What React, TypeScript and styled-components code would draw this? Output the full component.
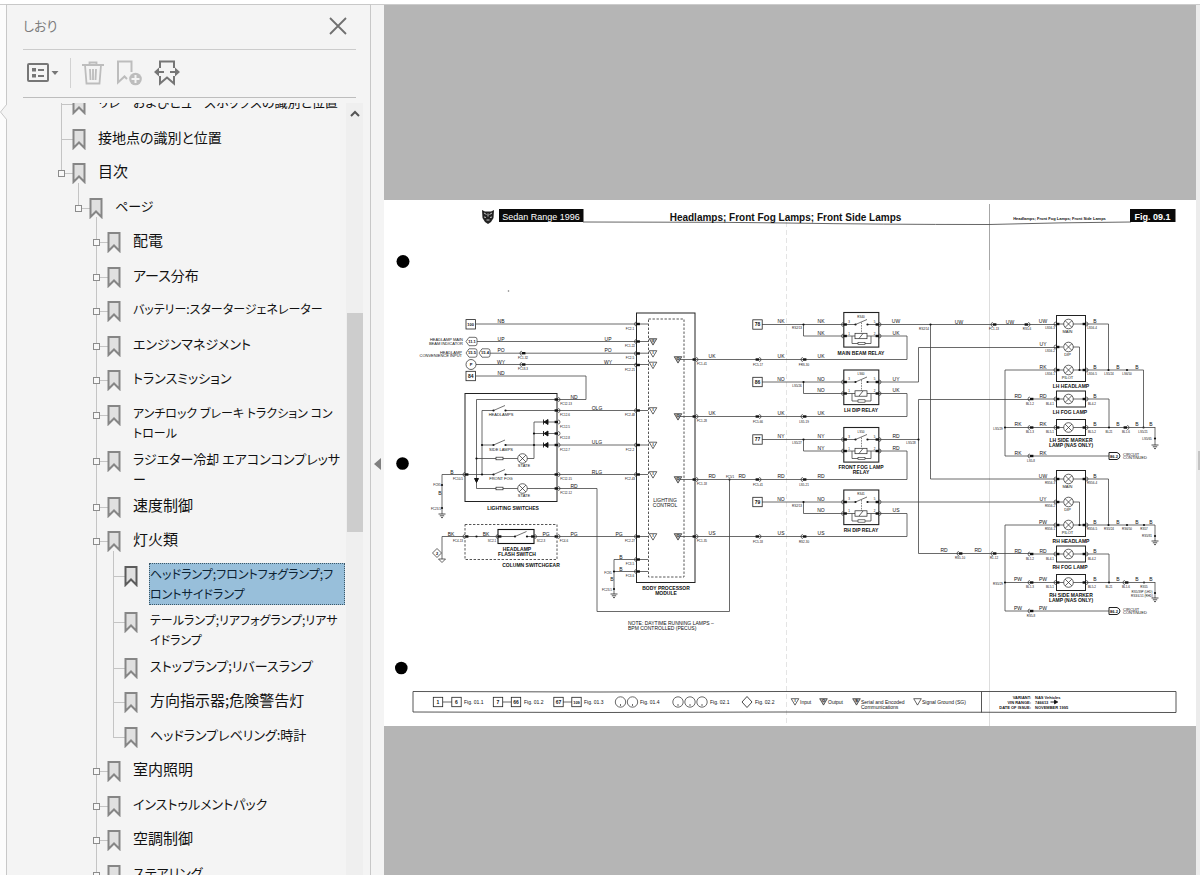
import React from "react";
import styled, { createGlobalStyle, css } from "styled-components";

const GlobalStyle = createGlobalStyle`
  * { box-sizing: border-box; }
  body {
    margin: 0;
    background: #fff;
    font-family: "Noto Sans CJK JP", "Liberation Sans", sans-serif;
  }
  button { border: 0; padding: 0; background: none; font: inherit; cursor: pointer; }
`;

/* ---------- window ---------- */

const Window = styled.div`
  display: flex;
  height: 100vh;
  padding-top: 4px;
  overflow: hidden;
`;

const TabStrip = styled.div`
  position: relative;
  flex: 0 0 6px;
  border-top: 1px solid #ccc;
  background: #fcfcfc;
`;

const TabPointer = styled.svg`
  position: absolute;
  left: 0;
  top: 98px;
  display: block;
`;

const Panel = styled.aside`
  flex: 0 0 365px;
  display: flex;
  flex-direction: column;
  padding-left: 16px;
  border: 1px solid #c8c8c8;
  border-bottom: 0;
  background: #f4f4f4;
`;

const PanelHeader = styled.header`
  display: flex;
  align-items: center;
  justify-content: space-between;
  height: 45px;
  margin-right: 14px;
  padding: 0 9px 3px 0;
  border-bottom: 1px solid #ccc;
`;

const PanelTitle = styled.h1`
  margin: 0;
  font-size: 13px;
  line-height: 20px;
  font-weight: 400;
  font-feature-settings: "palt";
  color: #7c7c7c;
`;

const IconButton = styled.button`
  display: flex;
  align-items: center;
  justify-content: center;
`;

const Toolbar = styled.div`
  display: flex;
  align-items: center;
  height: 48px;
  margin-right: 14px;
  padding: 0 0 1px 4px;
  gap: 11px;
  border-bottom: 1px solid #bdbdbd;
`;

const ToolDivider = styled.span`
  width: 1px;
  height: 30px;
  background: #d2d2d2;
`;

const TreeArea = styled.div`
  flex: 1;
  min-height: 0;
  display: flex;
  margin-top: 5px;
`;

const TreeViewport = styled.nav`
  flex: 1;
  overflow: hidden;
`;

const Tree = styled.ul`
  list-style: none;
  margin: -14px 0 0;
  padding: 0 0 0 49px;
`;

const INDENT = [0, 17, 35, 52];

const Row = styled.li<{ $depth: number }>`
  position: relative;
  display: flex;
  align-items: flex-start;
  gap: 10px;
  min-height: 34px;
  padding-left: ${(p) => INDENT[p.$depth]}px;
  &:nth-child(odd) { min-height: 35px; }
`;

const Rail = styled.span<{ $depth: number; $first?: boolean; $last?: boolean }>`
  position: absolute;
  left: ${(p) => INDENT[p.$depth] - 11}px;
  top: ${(p) => (p.$first ? -10 : 0)}px;
  width: 1px;
  ${(p) => (p.$last ? css`height: ${p.$first ? 25 : 15}px;` : css`bottom: 0;`)}
  background: #c4c4c4;
`;

const Twig = styled.span<{ $depth: number }>`
  position: absolute;
  left: ${(p) => INDENT[p.$depth] - 11}px;
  top: 15px;
  width: 12px;
  height: 1px;
  background: #c4c4c4;
`;

const Expander = styled.button<{ $depth: number }>`
  position: absolute;
  left: ${(p) => INDENT[p.$depth] - 14}px;
  top: 12px;
  width: 7px;
  height: 7px;
  border: 1px solid #8c8c8c;
  background: #f8f8f8;
`;

const Mark = styled.svg`
  position: relative;
  flex: none;
  display: block;
  margin-top: 5px;
`;

type Script = "kanji" | "mixed" | "kana" | "long";
const TEXT_SIZE: Record<Script, number> = { kanji: 15, mixed: 14, kana: 13, long: 12 };

const RowLink = styled.a<{ $script: Script; $selected?: boolean }>`
  flex: none;
  margin: 2px 0 2px 1px;
  border: 1px dotted ${(p) => (p.$selected ? "#3c5868" : "transparent")};
  min-width: ${(p) => (p.$selected ? 196 : 0)}px;
  background: ${(p) => (p.$selected ? "#98bfda" : "transparent")};
  color: ${(p) => (p.$selected ? "#0c2233" : "#111")};
  font-size: ${(p) => TEXT_SIZE[p.$script]}px;
  line-height: 20px;
  font-feature-settings: "palt";
  white-space: pre;
  text-decoration: none;
`;

const ScrollTrack = styled.div`
  flex: 0 0 17px;
  display: flex;
  flex-direction: column;
  align-items: center;
  margin-right: 7px;
  background: #efefef;
`;

const ScrollUp = styled(IconButton)`
  width: 17px;
  height: 20px;
`;

const ScrollThumb = styled.div`
  width: 16px;
  height: 25vh;
  margin-top: 190px;
  background: #cdcdcd;
`;

const Splitter = styled.div`
  flex: 0 0 13px;
  display: flex;
  align-items: center;
  justify-content: center;
  padding-top: 47px;
  border-top: 1px solid #ccc;
  background: #f4f4f4;
`;

const Viewer = styled.main`
  flex: 1;
  min-width: 0;
  padding-top: 195px;
  border-top: 1px solid #ccc;
  background: #b5b5b5;
`;

const Sheet = styled.svg`
  display: block;
  width: 100%;
  background: #fff;
  font-family: "Liberation Sans", Arial, sans-serif;
`;

const RightEdge = styled.div`
  flex: 0 0 4px;
  padding: 446px 0 0 2px;
  border-top: 1px solid #ccc;
  background: #ececec;
`;

const EdgeGrip = styled.div`
  height: 19px;
  background: #c4c4c4;
`;

/* ---------- bookmark tree ---------- */

type Item = { t: string; d: number; s: Script; open?: boolean; selected?: boolean; last?: boolean; first?: boolean };

const ITEMS: Item[] = [
  { t: "リレーおよびヒューズボックスの識別と位置", d: 0, s: "kana" },
  { t: "接地点の識別と位置", d: 0, s: "mixed" },
  { t: "目次", d: 0, s: "kanji", open: true, last: true },
  { t: "ページ", d: 1, s: "kana", open: true, first: true, last: true },
  { t: "配電", d: 2, s: "kanji", open: true, first: true },
  { t: "アース分布", d: 2, s: "mixed", open: true },
  { t: "バッテリー:スタータージェネレーター", d: 2, s: "long", open: true },
  { t: "エンジンマネジメント", d: 2, s: "kana", open: true },
  { t: "トランスミッション", d: 2, s: "kana", open: true },
  { t: "アンチロック ブレーキ トラクション コン\nトロール", d: 2, s: "long", open: true },
  { t: "ラジエター冷却 エアコンコンプレッサ\nー", d: 2, s: "kana", open: true },
  { t: "速度制御", d: 2, s: "kanji", open: true },
  { t: "灯火類", d: 2, s: "kanji", open: true },
  { t: "ヘッドランプ;フロントフォグランプ;フ\nロントサイドランプ", d: 3, s: "long", selected: true, first: true },
  { t: "テールランプ;リアフォグランプ;リアサ\nイドランプ", d: 3, s: "long" },
  { t: "ストップランプ;リバースランプ", d: 3, s: "kana" },
  { t: "方向指示器;危険警告灯", d: 3, s: "kanji" },
  { t: "ヘッドランプレベリング:時計", d: 3, s: "kana", last: true },
  { t: "室内照明", d: 2, s: "kanji", open: true },
  { t: "インストゥルメントパック", d: 2, s: "kana", open: true },
  { t: "空調制御", d: 2, s: "kanji", open: true },
  { t: "ステアリング", d: 2, s: "kana", open: true },
];

const BookmarkMark = ({ active }: { active?: boolean }) => (
  <Mark width="14" height="21" viewBox="0 0 14 21">
    <path d="M1.5 1H12.5V19L7 13.5L1.5 19Z" fill="#e0e0e0" stroke={active ? "#5c5c5c" : "#868686"} strokeWidth="2" />
  </Mark>
);

const BookmarkRow = ({ item }: { item: Item }) => (
  <Row $depth={item.d}>
    {item.d === 3 && <Rail $depth={2} />}
    <Rail $depth={item.d} $first={item.first} $last={item.last} />
    <Twig $depth={item.d} />
    {item.open && <Expander $depth={item.d} aria-label="展開" />}
    <BookmarkMark active={item.selected} />
    <RowLink href="#" $script={item.s} $selected={item.selected}>{item.t}</RowLink>
  </Row>
);

/* ---------- wiring sheet primitives ---------- */

type At = { x: number; y: number };
type Anchor = "start" | "middle" | "end";

const Label = ({ x, y, t, s = 5, b, a = "middle", fill = "#111" }: At & { t: string; s?: number; b?: boolean; a?: Anchor; fill?: string }) => (
  <text x={x} y={y} fontSize={s} fontWeight={b ? 700 : 400} textAnchor={a} fill={fill}>{t}</text>
);

const Labels = ({ list, s, b, a }: { list: [number, number, string][]; s?: number; b?: boolean; a?: Anchor }) => (
  <>{list.map(([x, y, t], i) => <Label key={i} x={x} y={y} t={t} s={s} b={b} a={a} />)}</>
);

const Wire = ({ d }: { d: string }) => <path d={d} fill="none" stroke="#444" strokeWidth="0.8" />;
const Dot = ({ x, y }: At) => <circle cx={x} cy={y} r="1.1" fill="#111" />;

const Joint = ({ x, y }: At) => (
  <g>
    <path d={`M${x} ${y - 2}a2 2 0 0 0 0 4`} fill="none" stroke="#333" strokeWidth="0.7" />
    <rect x={x} y={y - 1.2} width="3.4" height="2.4" fill="#111" />
  </g>
);

const JointBack = ({ x, y }: At) => (
  <g>
    <path d={`M${x} ${y - 2}a2 2 0 0 1 0 4`} fill="none" stroke="#333" strokeWidth="0.7" />
    <rect x={x - 3.4} y={y - 1.2} width="3.4" height="2.4" fill="#111" />
  </g>
);

const RefBox = ({ x, y, t }: At & { t: string }) => (
  <g>
    <rect x={x - 4.7} y={y - 4.7} width="9.4" height="9.4" fill="#fff" stroke="#222" strokeWidth="0.8" />
    <Label x={x} y={y + 1.8} t={t} s={t.length > 2 ? 4 : 5} b />
  </g>
);

const Tag = ({ x, y, t }: At & { t: string }) => (
  <g>
    <path d={`M${x} ${y}l3 -4.2h6q2 0 2 2v4.4q0 2 -2 2h-6z`} fill="#fff" stroke="#333" strokeWidth="0.7" />
    <Label x={x + 6} y={y + 1.4} t={t} s={4} b />
  </g>
);

const Lamp = ({ x, y }: At) => (
  <g fill="#fff" stroke="#222" strokeWidth="0.7">
    <circle cx={x} cy={y} r="4.8" />
    <path d={`M${x - 3.3} ${y - 3.3}l6.6 6.6M${x + 3.3} ${y - 3.3}l-6.6 6.6`} />
  </g>
);

const Switch = ({ x, y }: At) => (
  <g>
    <rect x={x} y={y - 2} width="12" height="4" fill="#fff" />
    <Dot x={x} y={y} />
    <Dot x={x + 12} y={y} />
    <path d={`M${x} ${y}l11.5 -5`} stroke="#333" strokeWidth="0.7" />
  </g>
);

const Ground = ({ x, y }: At) => (
  <path d={`M${x - 3.5} ${y}h7M${x - 2.2} ${y + 1.8}h4.4M${x - 1} ${y + 3.6}h2`} stroke="#222" strokeWidth="0.8" />
);

const Diode = ({ x, y }: At) => <path d={`M${x} ${y}l4 -2.5v5zM${x - 0.5} ${y - 2.5}v5`} fill="#111" stroke="#111" strokeWidth="0.9" />;

const Tri = ({ x, y, solid, t = "" }: At & { solid?: boolean; t?: string }) => (
  <g>
    <path d={`M${x - 3.8} ${y - 2.8}h7.6l-3.8 6.4z`} fill={solid ? "#bbb" : "#fff"} stroke="#222" strokeWidth="0.7" />
    <Label x={x} y={y + 0.9} t={t} s={4} b />
  </g>
);

const Frame = ({ x, y, w, h, dashed }: At & { w: number; h: number; dashed?: boolean }) => (
  <rect x={x} y={y} width={w} height={h} fill="none" stroke={dashed ? "#555" : "#222"} strokeWidth="1" strokeDasharray={dashed ? "2.4 1.6" : undefined} />
);

const Relay = ({ y, id }: { y: number; id: string }) => (
  <g>
    <rect x="843.8" y={y - 12} width="35" height="34.6" fill="#fff" stroke="#222" strokeWidth="1.1" />
    <Label x={861} y={y - 7} t={id} s={3} />
    <Wire d={`M844 ${y}h11M867 ${y}h12M844 ${y + 11.5}h11M867 ${y + 11.5}h12M852 ${y + 11.5}v7.5h19v-7.5`} />
    <Switch x={855.5} y={y} />
    <path d={`M861.5 ${y - 2}v11`} stroke="#333" strokeWidth="0.6" strokeDasharray="1.6 1" />
    <rect x="855" y={y + 8.8} width="12" height="5.4" fill="#fff" stroke="#222" strokeWidth="0.7" />
    <path d={`M859 ${y + 14}l4 -5`} stroke="#222" strokeWidth="0.7" />
    <rect x="858" y={y + 17.8} width="7" height="2.4" fill="#fff" stroke="#222" strokeWidth="0.6" />
    {[0, 11.5].map((o) => (
      <React.Fragment key={o}>
        <Joint x={843.5} y={y + o} />
        <JointBack x={879} y={y + o} />
      </React.Fragment>
    ))}
    <Labels s={3} list={[[849, y - 1.6, "3"], [874.5, y - 1.6, "5"], [849, y + 10, "1"], [874.5, y + 10, "2"]]} />
  </g>
);

type Feed = { y: number; ret: number; no: string; id: string; a: string; r: string; l1: string; l2: string; n: string; c1: string; c2: string };

const FEEDS: Feed[] = [
  { y: 324.5, ret: 359.5, no: "78", id: "RS40", a: "NK", r: "UK", l1: "UW", l2: "UK", n: "RS2/13", c1: "FC5-17", c2: "FRS-30" },
  { y: 382, ret: 416.5, no: "86", id: "LS60", a: "NO", r: "UK", l1: "UY", l2: "UK", n: "LS5/26", c1: "FC5-66", c2: "LS5-19" },
  { y: 439.5, ret: 479.5, no: "77", id: "LS50", a: "NY", r: "RD", l1: "RD", l2: "RD", n: "LS5/27", c1: "FC5-41", c2: "LS5-21" },
  { y: 502, ret: 536.5, no: "79", id: "RS41", a: "NO", r: "US", l1: "", l2: "US", n: "RS2/13", c1: "FC5-18", c2: "RS2-30" },
];

const RelayFeed = ({ f }: { f: Feed }) => (
  <g>
    <Wire d={`M762 ${f.y}H844M803.5 ${f.y}v11.5H844M879 ${f.y + 11.5}H907V${f.ret}H695`} />
    <RefBox x={757.5} y={f.y} t={f.no} />
    <Dot x={803.5} y={f.y} />
    <Labels list={[[781, f.y - 1.5, f.a], [821, f.y - 1.5, f.a], [821, f.y + 10, f.a], [896, f.y - 1.5, f.l1], [896, f.y + 10, f.l2], [712, f.ret - 1.5, f.r], [781, f.ret - 1.5, f.r], [821, f.ret - 1.5, f.r]]} />
    <Labels s={3} list={[[797, f.y + 4.5, f.n], [758, f.ret + 6, f.c1], [804, f.ret + 6, f.c2]]} />
    <JointBack x={759} y={f.ret} />
    <Joint x={803} y={f.ret} />
    <Relay y={f.y} id={f.id} />
  </g>
);

const LampSet = ({ y, side, p }: { y: number; side: string; p: string }) => (
  <g>
    <Wire d={`M1005 ${y + 46}H1109M1005 ${y + 46}V${y + 132}H1109M1005 ${y + 103.5}H1155M1057 ${y}H1108.5V${y + 46}M1073 ${y + 23}h6.5v23M1057 ${y + 23}h6M1030 ${y + 75}H1109V${y + 103.5}`} />
    {[[-8.5, 66], [67, 16], [95.5, 16]].map(([o, h]) => <Frame key={o} x={1056.5} y={y + o} w={29} h={h} />)}
    {[0, 23, 46, 75, 103.5].map((o) => <React.Fragment key={o}><Lamp x={1068.5} y={y + o} /><Joint x={1056} y={y + o} /></React.Fragment>)}
    {[0, 46, 75, 103.5].map((o) => <JointBack key={o} x={1086} y={y + o} />)}
    {[75, 103.5, 132].map((o) => <Joint key={o} x={1030} y={y + o} />)}
    <Dot x={1108.5} y={y + 46} /><Dot x={1109} y={y + 103.5} /><Dot x={1005} y={y + 103.5} /><Dot x={1079.5} y={y + 46} />
    <Labels s={4} list={[[1067.5, y + 9.4, "MAIN"], [1067.5, y + 32.4, "DIP"], [1067.5, y + 55.4, "PILOT"]]} />
    <Labels b list={[[1071, y + 64, `${side} HEADLAMP`], [1070, y + 90, `${side} FOG LAMP`], [1071, y + 118, `${side} SIDE MARKER`], [1071, y + 123, "LAMP (NAS ONLY)"]]} />
    <Labels list={[[1043, y - 1.5, "UW"], [1043, y + 21.5, "UY"], [1043, y + 44.5, p], [1018, y + 73.5, "RD"], [1043, y + 73.5, "RD"], [1018, y + 102, p], [1043, y + 102, p], [1018, y + 130.5, p], [1043, y + 130.5, p],
      [1095, y - 1.5, "B"], [1095, y + 44.5, "B"], [1118, y + 44.5, "B"], [1137, y + 44.5, "B"], [1095, y + 73.5, "B"], [1095, y + 102, "B"], [1118, y + 102, "B"], [1137, y + 102, "B"], [1151, y + 102, "B"]]} />
    <Labels s={3} list={[[1050, y + 5, `${side[0]}S56-3`], [1050, y + 28, `${side[0]}S56-2`], [1050, y + 51, `${side[0]}S56-1`], [1092, y + 5, `${side[0]}S56-4`], [1092, y + 51, `${side[0]}S56-5`], [1030, y + 80.5, "BL1-2"], [1050, y + 80.5, "BL4-1"], [1092, y + 80.5, "BL4-2"], [1030, y + 109, "BL1-3"], [1050, y + 109, "BL5-1"], [1092, y + 109, "BL5-2"], [1109, y + 109, "BL21"], [1126, y + 109, "BL1-6"], [1109, y + 51, `${side[0]}S5/24`], [1127, y + 51, `${side[0]}S6/50`], [1031, y + 138, `${side[0]}S5-8`], [998, y + 105.5, `${side[0]}S5/29`]]} />
    <path d={`M1109 ${y + 128.5}h8q3 1 3 3.5t-3 3.5h-8z`} fill="#fff" stroke="#222" />
    <Label x={1114} y={y + 133.6} t="86.2" s={4} b />
    <Labels s={4} a="start" list={[[1123, y + 131.5, "CIRCUIT"], [1123, y + 135, "CONTINUED"]]} />
  </g>
);

const IN_ROWS: [number, string][] = [[324, "FC2-1"], [341.5, "FC1-22"], [353.5, "FC2-5"], [365, "FC2-21"], [410.5, "FC2-48"], [445, "FC2-2"], [474.5, "FC2-43"], [536.5, "FC2-27"], [559.5, "FC3-5"], [571.5, "FC3-6"]];
const OUT_ROWS: [number, string][] = [[359.5, "FC1-41"], [416.5, "FC1-28"], [479.5, "FC1-18"], [536.5, "FC1-35"]];

const SwitchPart = () => (
  <g>
    <Wire d="M476 324H648M477 341.5H648M490 353.2H648M476 364.5H648M476 376H586V399.5H476.5V488.5H597V611.5H729.5V479.5" />
    <Wire d="M482 474.5V410.5H648M482 445H648M534 458.5V422H557M534 433.5H557M476.5 458.5H534M442 514V474.5H648M442 559V536.5H648M648 559.5H614V594M614 571.5H648" />
    <RefBox x={470.7} y={324.3} t="100" />
    <RefBox x={470.7} y={376} t="84" />
    <Tag x={466} y={341.5} t="11.1" />
    <Tag x={466} y={353} t="15.5" />
    <Tag x={479} y={353} t="15.4" />
    <circle cx="471" cy="364.5" r="5" fill="#fff" stroke="#222" strokeWidth="0.7" />
    <Label x={471} y={366.2} t="P" s={4} b />
    <Labels s={4} a="end" list={[[463, 341, "HEADLAMP MAIN"], [463, 344.5, "BEAM INDICATOR"], [462, 353.5, "HEADLAMP"], [462, 357, "CONVENIENCE INPUT"]]} />
    <Labels list={[[501, 323, "NB"], [501, 340.5, "UP"], [608, 340.5, "UP"], [501, 352, "PO"], [608, 352, "PO"], [501, 363.5, "WY"], [608, 363.5, "WY"], [501, 375, "ND"], [574, 398.5, "ND"], [597, 409.5, "OLG"], [597, 444, "ULG"], [597, 473.5, "RLG"], [574, 487.5, "RD"], [452, 473.5, "B"], [440, 495, "B"], [451, 535.5, "BK"], [486, 535.5, "BK"], [546, 535.5, "PG"], [574, 535.5, "PG"], [619, 535.5, "PG"], [621, 558.5, "B"], [621, 570.5, "B"], [612, 581, "B"], [742, 478, "RD"]]} />
    <Joint x={522} y={353.2} />
    <Joint x={522} y={364.5} />
    <Labels s={3} list={[[523, 358.5, "FC1-32"], [523, 370, "FC18-3"], [566, 405, "FC12-13"], [565, 416, "FC12-6"], [565, 427.5, "FC12-5"], [565, 439, "FC12-8"], [565, 450.5, "FC12-7"], [566, 480, "FC12-15"], [566, 494, "FC12-12"], [458, 480, "FC10-5"], [437, 486, "FC95"], [436, 510, "FC23-5"], [458, 542, "FC4-13"], [492, 542, "SC2-1"], [541, 542, "SC2-3"], [564, 542, "FC4-6"], [608, 573.5, "FC95"], [607, 591, "FC23-5"], [730, 478, "FC5/1"]]} />
    <Frame x={465} y={393.5} w={92} h={108} />
    {[399.5, 410.5, 422, 433.5, 445, 474.5, 488.5, 536.5].map((y) => <JointBack key={y} x={558} y={y} />)}
    <Joint x={465} y={474.5} />
    <Joint x={465} y={536.5} />
    {[410.5, 445, 474.5].map((y) => <Switch key={y} x={493.5} y={y} />)}
    {[422, 433.5, 445].map((y) => <Diode key={y} x={544} y={y} />)}
    <path d="M474.5 478.5h4l-2 4z" fill="#111" stroke="#111" />
    {[458.5, 488.5].map((y) => (
      <g key={y}>
        <rect x="496" y={y - 1.3} width="7" height="2.6" fill="#fff" stroke="#222" strokeWidth="0.7" />
        <Lamp x={522.5} y={y} />
      </g>
    ))}
    <Labels s={4} list={[[501, 416, "HEADLAMPS"], [501, 450.5, "SIDE LAMPS"], [501, 480, "FRONT FOG"], [524, 467, "STATE"], [524, 496.5, "STATE"]]} />
    {[[476.5, 458.5], [482, 445], [482, 474.5], [534, 433.5], [534, 445], [442, 485], [442, 508], [614, 571.5], [614, 589], [729.5, 479.5]].map(([x, y]) => <Dot key={`${x} ${y}`} x={x} y={y} />)}
    <Ground x={442} y={514} />
    <Ground x={614} y={594} />
    <path d="M438.5 559h7l-3.5 3.5z" fill="#fff" stroke="#222" strokeWidth="0.7" />
    <path d="M437 548.5l4.5 4.5l-4.5 4.5l-4.5 -4.5z" fill="#fff" stroke="#222" strokeWidth="0.7" />
    <Label x={437} y={554.5} t="2" s={4} b />
    <Frame x={465} y={524.5} w={92} h={35} dashed />
    <rect x="498" y="529.5" width="36" height="14" fill="#fff" stroke="#111" strokeWidth="1.1" />
    <Wire d="M498 536.5H534" />
    <Switch x={515} y={536.5} />
    <Joint x={498} y={536.5} />
    <JointBack x={534.5} y={536.5} />
    <Dot x={476.5} y={536.5} />
    <Labels b list={[[513, 509.5, "LIGHTING SWITCHES"], [517, 550.5, "HEADLAMP"], [517, 555.5, "FLASH SWITCH"], [531, 566.5, "COLUMN SWITCHGEAR"], [666, 589.5, "BODY PROCESSOR"], [666, 594.5, "MODULE"]]} />
    <Labels list={[[665, 502, "LIGHTING"], [665, 507, "CONTROL"]]} />
    <Labels a="start" list={[[628, 625, "NOTE: DAYTIME RUNNING LAMPS –"], [628, 630, "BPM CONTROLLED (PECUS)"]]} />
    <Frame x={636.5} y={313} w={58.5} h={269.5} />
    <Frame x={648.5} y={319} w={35.5} h={258} dashed />
    {IN_ROWS.map(([y, t], i) => (
      <g key={y}>
        <Joint x={636.5} y={y} />
        <Label x={630} y={y + 5.5} t={t} s={3} />
        {i > 0 && i < 8 && <Tri x={653} y={y} t="I" solid={i === 1} />}
      </g>
    ))}
    {OUT_ROWS.map(([y, t]) => (
      <g key={y}>
        <Wire d={`M678 ${y}H695`} />
        <Tri x={678} y={y} t="O" solid />
        <JointBack x={696} y={y} />
        <Label x={702} y={y + 5.5} t={t} s={3} />
      </g>
    ))}
  </g>
);

const Legend = () => (
  <g>
    <path d="M413 691.5L600 692L780 691.5H1176V712.5L780 712L600 712.5L413 712ZM981.5 691.5V712.5" fill="none" stroke="#444" strokeWidth="0.9" />
    <Wire d="M443 702H452M503 702H512M563 702H572" />
    <RefBox x={438} y={702} t="1" />
    <RefBox x={456.5} y={702} t="6" />
    <RefBox x={498} y={702} t="7" />
    <RefBox x={516} y={702} t="66" />
    <RefBox x={558.5} y={702} t="67" />
    <RefBox x={576.5} y={702} t="109" />
    {[620.5, 632.5, 678, 690, 702].map((x) => (
      <g key={x} stroke="#444" strokeWidth="0.8">
        <circle cx={x} cy="702" r="5.2" fill="none" />
        <path d={`M${x} 704v2`} />
      </g>
    ))}
    <path d="M747 696.5l5 5.5l-5 5.5l-5 -5.5z" fill="none" stroke="#333" strokeWidth="0.9" />
    <Tri x={795} y={701.5} t="I" />
    <Tri x={823.5} y={701.5} t="O" solid />
    <Tri x={856.5} y={701.5} t="S" solid />
    <Tri x={917.5} y={701.5} />
    <Labels a="start" list={[[464, 704, "Fig. 01.1"], [524, 704, "Fig. 01.2"], [584, 704, "Fig. 01.3"], [640, 704, "Fig. 01.4"], [710, 704, "Fig. 02.1"], [755, 704, "Fig. 02.2"], [800, 704, "Input"], [828, 704, "Output"], [861, 704, "Serial and Encoded"], [861, 709, "Communications"], [922, 704, "Signal Ground (SG)"]]} />
    <Labels s={4} b a="end" list={[[1031, 698.5, "VARIANT:"], [1031, 703.5, "VIN RANGE:"], [1031, 708.5, "DATE OF ISSUE:"]]} />
    <Labels s={4} b a="start" list={[[1035, 698.5, "NAS Vehicles"], [1035, 703.5, "746613"], [1035, 708.5, "NOVEMBER 1995"]]} />
    <path d="M1050.5 702h5M1054.5 700.2l3.2 1.8l-3.2 1.8z" fill="#111" stroke="#111" strokeWidth="0.9" />
  </g>
);

const SheetHeader = () => (
  <g>
    <path d="M482 210l3 1.5h6l3 -1.500l-0.5 8l-2.5 4l-3 2l-3 -2l-2.5 -4z" fill="#222" />
    <path d="M484 213l2.5 1.5M492 213l-2.5 1.5M484 217l2 0.5M492 217l-2 0.5M486.5 220h3M488 213.5v3" stroke="#eee" strokeWidth="0.8" />
    <rect x="499" y="209" width="84.5" height="13" fill="#0a0a0a" />
    <Label x={541} y={219.5} t="Sedan Range 1996" s={9} fill="#fff" />
    <path d="M583 222L720 222.3L786 223Q880 224.5 989 224.500Q1060 222.5 1131 222" fill="none" stroke="#555" strokeWidth="0.9" />
    <Label x={785.5} y={220.5} t="Headlamps; Front Fog Lamps; Front Side Lamps" s={10} b />
    <Label x={1059.5} y={220} t="Headlamps; Front Fog Lamps; Front Side Lamps" s={4} b />
    <rect x="1130" y="209" width="45.5" height="13" fill="#0a0a0a" />
    <Label x={1152.5} y={219.5} t="Fig. 09.1" s={9} b fill="#fff" />
  </g>
);

const WiringSheet = () => (
  <Sheet viewBox="384 200 812 526" role="img" aria-label="Headlamps; Front Fog Lamps; Front Side Lamps">
    <path d="M989.5 204V726" stroke="#d4d4d4" strokeWidth="0.8" />
    <path d="M989.5 204V270" stroke="#999" strokeWidth="0.8" />
    <path d="M786.5 222V726" stroke="#ddd" strokeWidth="0.8" strokeDasharray="5 3" />
    <circle cx="403" cy="261.5" r="6.5" />
    <circle cx="402.5" cy="463.5" r="6.3" />
    <circle cx="401.3" cy="668" r="6.3" />
    <circle cx="508.5" cy="291" r="0.8" fill="#777" />
    <SheetHeader />
    <SwitchPart />
    {FEEDS.map((f) => <RelayFeed key={f.y} f={f} />)}
    <Labels b list={[[861, 354.5, "MAIN BEAM RELAY"], [861, 411.5, "LH DIP RELAY"], [861, 469, "FRONT FOG LAMP"], [861, 474, "RELAY"], [861, 532, "RH DIP RELAY"]]} />
    <Wire d="M879 324.5H1057M930.5 324.5V479H1057M879 382H918.5V347.5H1057M879 439.5H918.5M1030 399.5H918.5V553.5H1030M879 502H1057M1108 370H1143.5V427.5M1155 427V445M1108 525H1155V541M1155 582V598" />
    {[[930.5, 324.5], [918.5, 439.5], [1127, 370], [1143.5, 427.5], [1155, 438.5], [1127, 525], [1144, 525], [1155, 536], [1144, 582.5], [1155, 593]].map(([x, y]) => <Dot key={`${x} ${y}`} x={x} y={y} />)}
    <LampSet y={324} side="LH" p="RK" />
    <LampSet y={479} side="RH" p="PW" />
    <Joint x={993} y={324.5} />
    <JointBack x={1028} y={324.5} />
    <JointBack x={1127} y={427.5} />
    <Joint x={1125} y={582.5} />
    <Joint x={959} y={553.5} />
    <Joint x={993} y={553.5} />
    <Ground x={1155} y={445} />
    <Ground x={1155} y={541} />
    <Ground x={1155} y={598} />
    <Labels list={[[959, 323.5, "UW"], [1010, 323.5, "UW"], [944, 552, "RD"], [978, 552, "RD"], [1151, 523.5, "B"]]} />
    <Labels s={3} list={[[924, 329.5, "RS2/14"], [994, 330, "FC1-13"], [1027, 330, "RS5-6"], [911, 443.5, "LS5/28"], [1143, 432.5, "LS5/21"], [1147, 440, "LS5/65"], [960, 559, "RS5-10"], [994, 559, "R1-12"], [1144, 530, "RS57"], [1147, 537, "RS5/81"], [1144, 588, "RS55"], [1142, 592.5, "RS5/39P (LHD)"], [1142, 596.5, "RS3/4-51 (RHD)"]]} />
    <Legend />
  </Sheet>
);

/* ---------- page ---------- */

export default function App() {
  return (
    <>
      <GlobalStyle />
      <Window>
        <TabStrip>
          <TabPointer width="7" height="18" viewBox="0 0 7 18">
            <path d="M7 1L0.5 9L7 17" fill="#f4f4f4" stroke="#c8c8c8" />
          </TabPointer>
        </TabStrip>
        <Panel>
          <PanelHeader>
            <PanelTitle>しおり</PanelTitle>
            <IconButton aria-label="閉じる">
              <svg width="18" height="18" viewBox="0 0 18 18"><path d="M1 1L17 17M17 1L1 17" stroke="#707070" strokeWidth="1.8" /></svg>
            </IconButton>
          </PanelHeader>
          <Toolbar>
            <IconButton aria-label="オプション">
              <svg width="32" height="20" viewBox="0 0 32 20">
                <rect x="1" y="1" width="20" height="17" rx="1" fill="none" stroke="#767676" strokeWidth="2" />
                <path d="M5 5h4v3.500h-4zM5 11h4v3.500h-4z" fill="#767676" />
                <path d="M11 7h6M11 13h6" stroke="#767676" strokeWidth="1.8" />
                <path d="M24.500 8h7l-3.500 4z" fill="#767676" />
              </svg>
            </IconButton>
            <ToolDivider />
            <IconButton aria-label="削除">
              <svg width="22" height="24" viewBox="0 0 22 24" fill="none" stroke="#bdbdbd" strokeWidth="1.8">
                <path d="M0 4H22M7.5 4V1.500H14.5V4M3 4L4.5 22.500H17.5L19 4M8 8L8.5 19M11 8V19M14 8L13.5 19" />
              </svg>
            </IconButton>
            <IconButton aria-label="新規しおり">
              <svg width="28" height="26" viewBox="0 0 28 26">
                <path d="M16.5 12V1.500H3V22.500L9.5 16.500L12 19" fill="none" stroke="#bdbdbd" strokeWidth="2" />
                <circle cx="20.5" cy="19" r="6.3" fill="#bdbdbd" />
                <path d="M16.5 19h8M20.5 15v8" stroke="#f4f4f4" strokeWidth="2" />
              </svg>
            </IconButton>
            <IconButton aria-label="現在のしおりを検索">
              <svg width="26" height="26" viewBox="0 0 26 26">
                <path d="M6 8V1.500H20V8M6 16V23.500L13 17.500L20 23.500V16M3 12H10M16 12H23" fill="none" stroke="#767676" strokeWidth="2" />
                <path d="M0 12l5 -4.500v9zM26 12l-5 -4.500v9z" fill="#767676" />
              </svg>
            </IconButton>
          </Toolbar>
          <TreeArea>
            <TreeViewport aria-label="しおり">
              <Tree>{ITEMS.map((item) => <BookmarkRow key={item.t} item={item} />)}</Tree>
            </TreeViewport>
            <ScrollTrack>
              <ScrollUp aria-label="上へスクロール">
                <svg width="10" height="7" viewBox="0 0 10 7"><path d="M1 6L5 2L9 6" fill="none" stroke="#555" strokeWidth="2" /></svg>
              </ScrollUp>
              <ScrollThumb />
            </ScrollTrack>
          </TreeArea>
        </Panel>
        <Splitter>
          <IconButton aria-label="パネルを閉じる">
            <svg width="7" height="12" viewBox="0 0 7 12"><path d="M7 0V12L0 6Z" fill="#808080" /></svg>
          </IconButton>
        </Splitter>
        <Viewer>
          <WiringSheet />
        </Viewer>
        <RightEdge><EdgeGrip /></RightEdge>
      </Window>
    </>
  );
}
